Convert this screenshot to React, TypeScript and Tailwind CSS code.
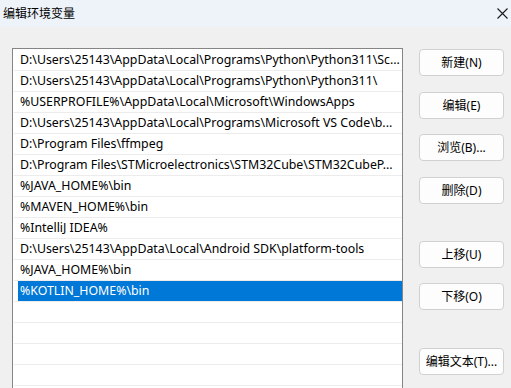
import { useState } from "react"

const paths = [
  "D:\\Users\\25143\\AppData\\Local\\Programs\\Python\\Python311\\Sc...",
  "D:\\Users\\25143\\AppData\\Local\\Programs\\Python\\Python311\\",
  "%USERPROFILE%\\AppData\\Local\\Microsoft\\WindowsApps",
  "D:\\Users\\25143\\AppData\\Local\\Programs\\Microsoft VS Code\\b...",
  "D:\\Program Files\\ffmpeg",
  "D:\\Program Files\\STMicroelectronics\\STM32Cube\\STM32CubeP...",
  "%JAVA_HOME%\\bin",
  "%MAVEN_HOME%\\bin",
  "%IntelliJ IDEA%",
  "D:\\Users\\25143\\AppData\\Local\\Android SDK\\platform-tools",
  "%JAVA_HOME%\\bin",
  "%KOTLIN_HOME%\\bin",
  "",
  "",
  "",
  "",
]

const buttons = [
  { label: "新建(N)", mt: "mt-0" },
  { label: "编辑(E)", mt: "mt-[16px]" },
  { label: "浏览(B)...", mt: "mt-[15px]" },
  { label: "删除(D)", mt: "mt-[16px]" },
  { label: "上移(U)", mt: "mt-[37px]" },
  { label: "下移(O)", mt: "mt-[15px]" },
  { label: "编辑文本(T)...", mt: "mt-[38px]" },
]

export default function App() {
  const [selected, setSelected] = useState(11)

  return (
    <div
      className="w-[511px] h-[388px] overflow-hidden bg-[#f0f0f0] text-[12px] text-black"
      style={{ fontFamily: '"Noto Sans", "Noto Sans CJK SC", sans-serif' }}
    >
      <div className="h-[27px] bg-[#eef3f9] flex items-center justify-between pl-[3px] pr-[2px]">
        <span className="text-[12px] leading-none">编辑环境变量</span>
        <svg width="11" height="11" viewBox="0 0 11 11" className="mr-[1px]">
          <path d="M0.5 0.5 L10.5 10.5 M10.5 0.5 L0.5 10.5" stroke="#1a1a1a" strokeWidth="1.1" fill="none" />
        </svg>
      </div>

      <div className="flex pt-[21px] pl-[12px] gap-[16px]">
        <div className="w-[391px] h-[400px] bg-white border border-[#858585] p-[1px] pr-0">
          {paths.map((p, i) => (
            <div key={i} className="h-[21px] border-b border-[#ececec]" onClick={() => p && setSelected(i)}>
              <div
                className={`h-[20px] ml-[4px] pl-[2px] leading-[20px] text-[12.35px] whitespace-nowrap overflow-hidden ${
                  i === selected ? "bg-[#0078d7] text-white" : ""
                }`}
              >
                {p}
              </div>
            </div>
          ))}
        </div>

        <div className="flex flex-col pt-[1px]">
          {buttons.map((b) => (
            <button
              key={b.label}
              className={`${b.mt} w-[85px] h-[27px] bg-[#fdfdfd] border border-[#d0d0d0] rounded-[4px] text-[12px] leading-none`}
            >
              {b.label}
            </button>
          ))}
        </div>
      </div>
    </div>
  )
}
